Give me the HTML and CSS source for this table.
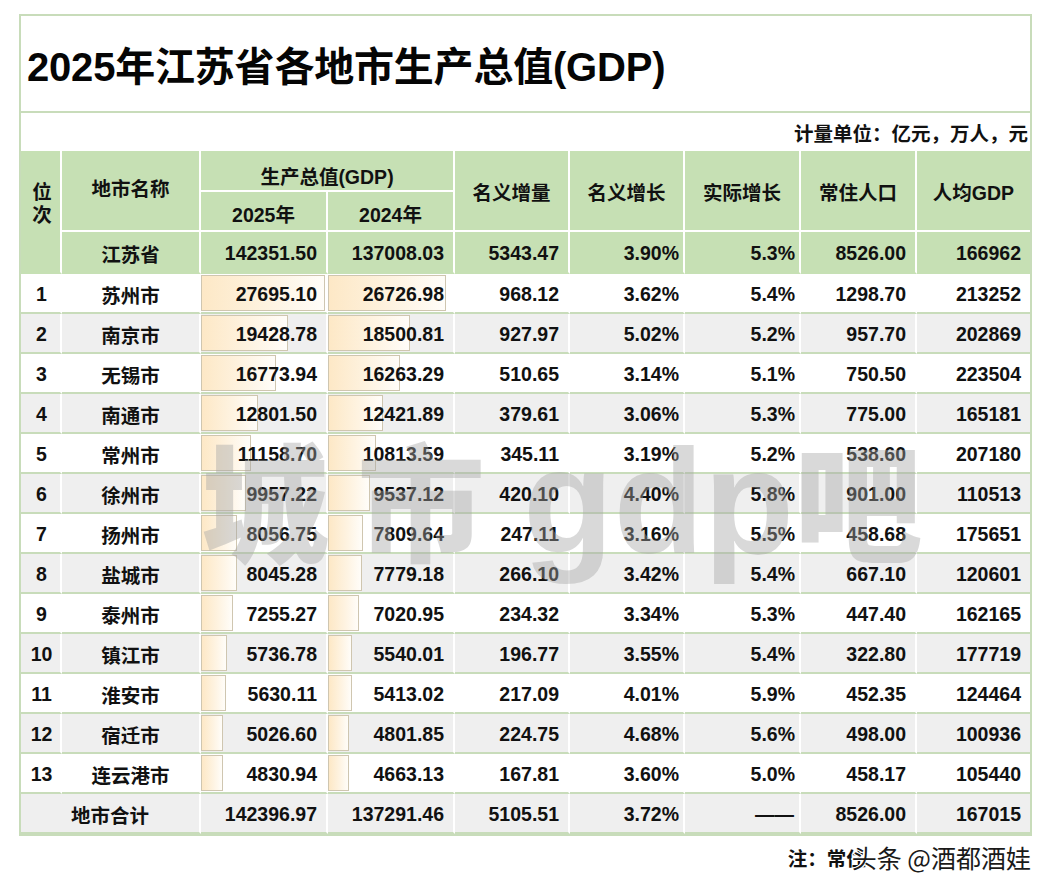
FILE: index.html
```html
<!DOCTYPE html>
<html lang="zh-CN">
<head>
<meta charset="utf-8">
<title>2025年江苏省各地市生产总值(GDP)</title>
<link rel="stylesheet" href="styles.css">
</head>
<body>
<div class="page">
  <div class="sheet">
    <div class="title">2025年江苏省各地市生产总值(GDP)</div>
    <div class="unit">计量单位：亿元，万人，元</div>
    <table class="grid">
      <colgroup>
        <col class="c-rank"><col class="c-name"><col class="c-gdp"><col class="c-gdp">
        <col class="c-a"><col class="c-a"><col class="c-b"><col class="c-b"><col class="c-last">
      </colgroup>
      <thead>
        <tr>
          <th rowspan="3" class="h-rank">位<br>次</th>
          <th rowspan="2" class="h-name">地市名称</th>
          <th colspan="2" class="h-gdp">生产总值(GDP)</th>
          <th rowspan="2" class="h-mid">名义增量</th>
          <th rowspan="2" class="h-mid">名义增长</th>
          <th rowspan="2" class="h-mid">实际增长</th>
          <th rowspan="2" class="h-mid">常住人口</th>
          <th rowspan="2" class="h-mid last">人均GDP</th>
        </tr>
        <tr>
          <th class="h-year">2025年</th>
          <th class="h-year">2024年</th>
        </tr>
        <tr class="prov">
          <th class="name">江苏省</th>
          <td class="num">142351.50</td>
          <td class="num">137008.03</td>
          <td class="num">5343.47</td>
          <td class="pct">3.90%</td>
          <td class="pct">5.3%</td>
          <td class="num">8526.00</td>
          <td class="num last">166962</td>
        </tr>
      </thead>
      <tbody>
        <tr class="odd"><td class="rank">1</td><td class="name">苏州市</td><td class="num bar"><div class="cell"><span class="db" style="width:124px"></span><span class="v">27695.10</span></div></td><td class="num bar"><div class="cell"><span class="db" style="width:118px"></span><span class="v">26726.98</span></div></td><td class="num">968.12</td><td class="pct">3.62%</td><td class="pct">5.4%</td><td class="num">1298.70</td><td class="num last">213252</td></tr>
        <tr class="even"><td class="rank">2</td><td class="name">南京市</td><td class="num bar"><div class="cell"><span class="db" style="width:87px"></span><span class="v">19428.78</span></div></td><td class="num bar"><div class="cell"><span class="db" style="width:82px"></span><span class="v">18500.81</span></div></td><td class="num">927.97</td><td class="pct">5.02%</td><td class="pct">5.2%</td><td class="num">957.70</td><td class="num last">202869</td></tr>
        <tr class="odd"><td class="rank">3</td><td class="name">无锡市</td><td class="num bar"><div class="cell"><span class="db" style="width:75px"></span><span class="v">16773.94</span></div></td><td class="num bar"><div class="cell"><span class="db" style="width:72px"></span><span class="v">16263.29</span></div></td><td class="num">510.65</td><td class="pct">3.14%</td><td class="pct">5.1%</td><td class="num">750.50</td><td class="num last">223504</td></tr>
        <tr class="even"><td class="rank">4</td><td class="name">南通市</td><td class="num bar"><div class="cell"><span class="db" style="width:57px"></span><span class="v">12801.50</span></div></td><td class="num bar"><div class="cell"><span class="db" style="width:55px"></span><span class="v">12421.89</span></div></td><td class="num">379.61</td><td class="pct">3.06%</td><td class="pct">5.3%</td><td class="num">775.00</td><td class="num last">165181</td></tr>
        <tr class="odd"><td class="rank">5</td><td class="name">常州市</td><td class="num bar"><div class="cell"><span class="db" style="width:50px"></span><span class="v">11158.70</span></div></td><td class="num bar"><div class="cell"><span class="db" style="width:48px"></span><span class="v">10813.59</span></div></td><td class="num">345.11</td><td class="pct">3.19%</td><td class="pct">5.2%</td><td class="num">538.60</td><td class="num last">207180</td></tr>
        <tr class="even"><td class="rank">6</td><td class="name">徐州市</td><td class="num bar"><div class="cell"><span class="db" style="width:45px"></span><span class="v">9957.22</span></div></td><td class="num bar"><div class="cell"><span class="db" style="width:42px"></span><span class="v">9537.12</span></div></td><td class="num">420.10</td><td class="pct">4.40%</td><td class="pct">5.8%</td><td class="num">901.00</td><td class="num last">110513</td></tr>
        <tr class="odd"><td class="rank">7</td><td class="name">扬州市</td><td class="num bar"><div class="cell"><span class="db" style="width:36px"></span><span class="v">8056.75</span></div></td><td class="num bar"><div class="cell"><span class="db" style="width:35px"></span><span class="v">7809.64</span></div></td><td class="num">247.11</td><td class="pct">3.16%</td><td class="pct">5.5%</td><td class="num">458.68</td><td class="num last">175651</td></tr>
        <tr class="even"><td class="rank">8</td><td class="name">盐城市</td><td class="num bar"><div class="cell"><span class="db" style="width:36px"></span><span class="v">8045.28</span></div></td><td class="num bar"><div class="cell"><span class="db" style="width:34px"></span><span class="v">7779.18</span></div></td><td class="num">266.10</td><td class="pct">3.42%</td><td class="pct">5.4%</td><td class="num">667.10</td><td class="num last">120601</td></tr>
        <tr class="odd"><td class="rank">9</td><td class="name">泰州市</td><td class="num bar"><div class="cell"><span class="db" style="width:32px"></span><span class="v">7255.27</span></div></td><td class="num bar"><div class="cell"><span class="db" style="width:31px"></span><span class="v">7020.95</span></div></td><td class="num">234.32</td><td class="pct">3.34%</td><td class="pct">5.3%</td><td class="num">447.40</td><td class="num last">162165</td></tr>
        <tr class="even"><td class="rank">10</td><td class="name">镇江市</td><td class="num bar"><div class="cell"><span class="db" style="width:26px"></span><span class="v">5736.78</span></div></td><td class="num bar"><div class="cell"><span class="db" style="width:24px"></span><span class="v">5540.01</span></div></td><td class="num">196.77</td><td class="pct">3.55%</td><td class="pct">5.4%</td><td class="num">322.80</td><td class="num last">177719</td></tr>
        <tr class="odd"><td class="rank">11</td><td class="name">淮安市</td><td class="num bar"><div class="cell"><span class="db" style="width:25px"></span><span class="v">5630.11</span></div></td><td class="num bar"><div class="cell"><span class="db" style="width:24px"></span><span class="v">5413.02</span></div></td><td class="num">217.09</td><td class="pct">4.01%</td><td class="pct">5.9%</td><td class="num">452.35</td><td class="num last">124464</td></tr>
        <tr class="even"><td class="rank">12</td><td class="name">宿迁市</td><td class="num bar"><div class="cell"><span class="db" style="width:22px"></span><span class="v">5026.60</span></div></td><td class="num bar"><div class="cell"><span class="db" style="width:21px"></span><span class="v">4801.85</span></div></td><td class="num">224.75</td><td class="pct">4.68%</td><td class="pct">5.6%</td><td class="num">498.00</td><td class="num last">100936</td></tr>
        <tr class="odd"><td class="rank">13</td><td class="name">连云港市</td><td class="num bar"><div class="cell"><span class="db" style="width:22px"></span><span class="v">4830.94</span></div></td><td class="num bar"><div class="cell"><span class="db" style="width:21px"></span><span class="v">4663.13</span></div></td><td class="num">167.81</td><td class="pct">3.60%</td><td class="pct">5.0%</td><td class="num">458.17</td><td class="num last">105440</td></tr>
        <tr class="even total"><td colspan="2" class="name">地市合计</td><td class="num">142396.97</td><td class="num">137291.46</td><td class="num">5105.51</td><td class="pct">3.72%</td><td class="pct dash">——</td><td class="num">8526.00</td><td class="num last">167015</td></tr>
      </tbody>
    </table>
    <div class="watermark"><span class="wm-cjk first">城</span><span class="wm-cjk second">市</span><span class="wm-lat">gdp</span><span class="wm-cjk">吧</span></div>
  </div>
  <div class="note">注：常住<span class="stamp">头条 @酒都酒娃</span></div>
</div>
</body>
</html>
```

FILE: styles.css
```css
html, body {
  margin: 0;
  padding: 0;
  background: #ffffff;
}

body {
  font-family: "Liberation Sans", "Noto Sans CJK SC", sans-serif;
  color: #111111;
}

.page {
  width: 1050px;
  padding-top: 14px;
}

.sheet {
  position: relative;
  margin-left: 19px;
  width: 1013px;
  box-sizing: border-box;
  border: 2px solid #c8dcba;
  overflow: hidden;
}

.title {
  height: 97px;
  box-sizing: border-box;
  border-bottom: 2px solid #c8dcba;
  padding-left: 6px;
  display: flex;
  align-items: center;
  font-size: 40px;
  font-weight: bold;
  letter-spacing: -0.2px;
  color: #050505;
}

.unit {
  height: 38px;
  display: flex;
  align-items: center;
  justify-content: flex-end;
  padding-right: 2px;
  font-size: 19.5px;
  font-weight: bold;
}

.grid {
  width: 1009px;
  table-layout: fixed;
  border-collapse: separate;
  border-spacing: 0;
  font-size: 19.5px;
  font-weight: bold;
}

.c-rank { width: 41px; }
.c-name { width: 139px; }
.c-gdp { width: 127px; }
.c-a { width: 115px; }
.c-b { width: 116px; }
.c-last { width: 113px; }

.grid th,
.grid td {
  box-sizing: border-box;
  height: 40px;
  padding: 0;
  border-right: 2px solid #ffffff;
  border-bottom: 2px solid #c8dcba;
  white-space: nowrap;
  font-weight: bold;
  vertical-align: middle;
}

.grid tbody td {
  padding-top: 3px;
}

.grid .last {
  border-right: none;
}

.grid thead th,
.grid thead td {
  background: #c6e0b4;
  border-bottom-color: #ffffff;
  text-align: center;
}

.grid thead tr.prov th,
.grid thead tr.prov td {
  height: 42px;
  padding-top: 2px;
  border-bottom-color: #c6e0b4;
}

.h-rank {
  vertical-align: top !important;
  padding-top: 30px !important;
  padding-left: 3px !important;
  line-height: 23px;
  border-bottom-color: #c6e0b4 !important;
}

.h-name {
  padding-bottom: 6px !important;
}

.h-mid {
  padding-top: 2px !important;
}

.h-gdp {
  padding-top: 10px !important;
}

.h-year {
  padding-top: 4px !important;
}

.grid .num {
  text-align: right;
  padding-right: 9px;
}

.grid .pct {
  text-align: right;
  padding-right: 4px;
}

.grid .rank {
  text-align: center;
  padding-left: 2px;
}

.grid .name {
  text-align: center;
}

tr.odd td { background: #ffffff; }
tr.even td { background: #efefef; }

.grid td.bar {
  padding: 0;
}

.cell {
  position: relative;
  height: 38px;
  display: flex;
  align-items: center;
  justify-content: flex-end;
  padding-top: 3px;
  box-sizing: border-box;
  padding-right: 9px;
}

.db {
  position: absolute;
  left: 0;
  top: 1px;
  height: 36px;
  box-sizing: border-box;
  border: 1px solid #cfc6b0;
  background: linear-gradient(to right, #fde8c6 0%, #fef3e1 55%, #fffdf9 100%);
}

.v {
  position: relative;
}

.grid td.dash {
  font-weight: bold;
  letter-spacing: 0;
  padding-right: 5px;
}

.watermark {
  position: absolute;
  left: 180px;
  top: 412px;
  display: flex;
  align-items: baseline;
  color: rgba(165, 165, 165, 0.42);
  pointer-events: none;
  white-space: nowrap;
}

.wm-cjk {
  font-family: "Noto Sans CJK SC", sans-serif;
  font-weight: 900;
  font-size: 128px;
  line-height: 1;
}

.wm-cjk.first {
  margin-right: 28px;
}

.wm-cjk.second {
  margin-right: 38px;
}

.wm-lat {
  font-family: "Liberation Sans", sans-serif;
  font-weight: bold;
  font-size: 148px;
  line-height: 1;
  margin-right: 0;
}

.note {
  height: 42px;
  display: flex;
  align-items: center;
  justify-content: flex-end;
  padding-right: 19px;
  font-size: 19.5px;
  font-weight: bold;
  color: #111;
}

.stamp {
  position: relative;
  font-family: "Noto Sans CJK SC", sans-serif;
  font-weight: normal;
  font-size: 25px;
  margin-left: -14px;
  color: #1a1a1a;
  text-shadow: 1px 0 0 #fff, -1px 0 0 #fff, 0 1px 0 #fff, 0 -1px 0 #fff, 2px 0 0 #fff, -2px 0 0 #fff;
}
```
